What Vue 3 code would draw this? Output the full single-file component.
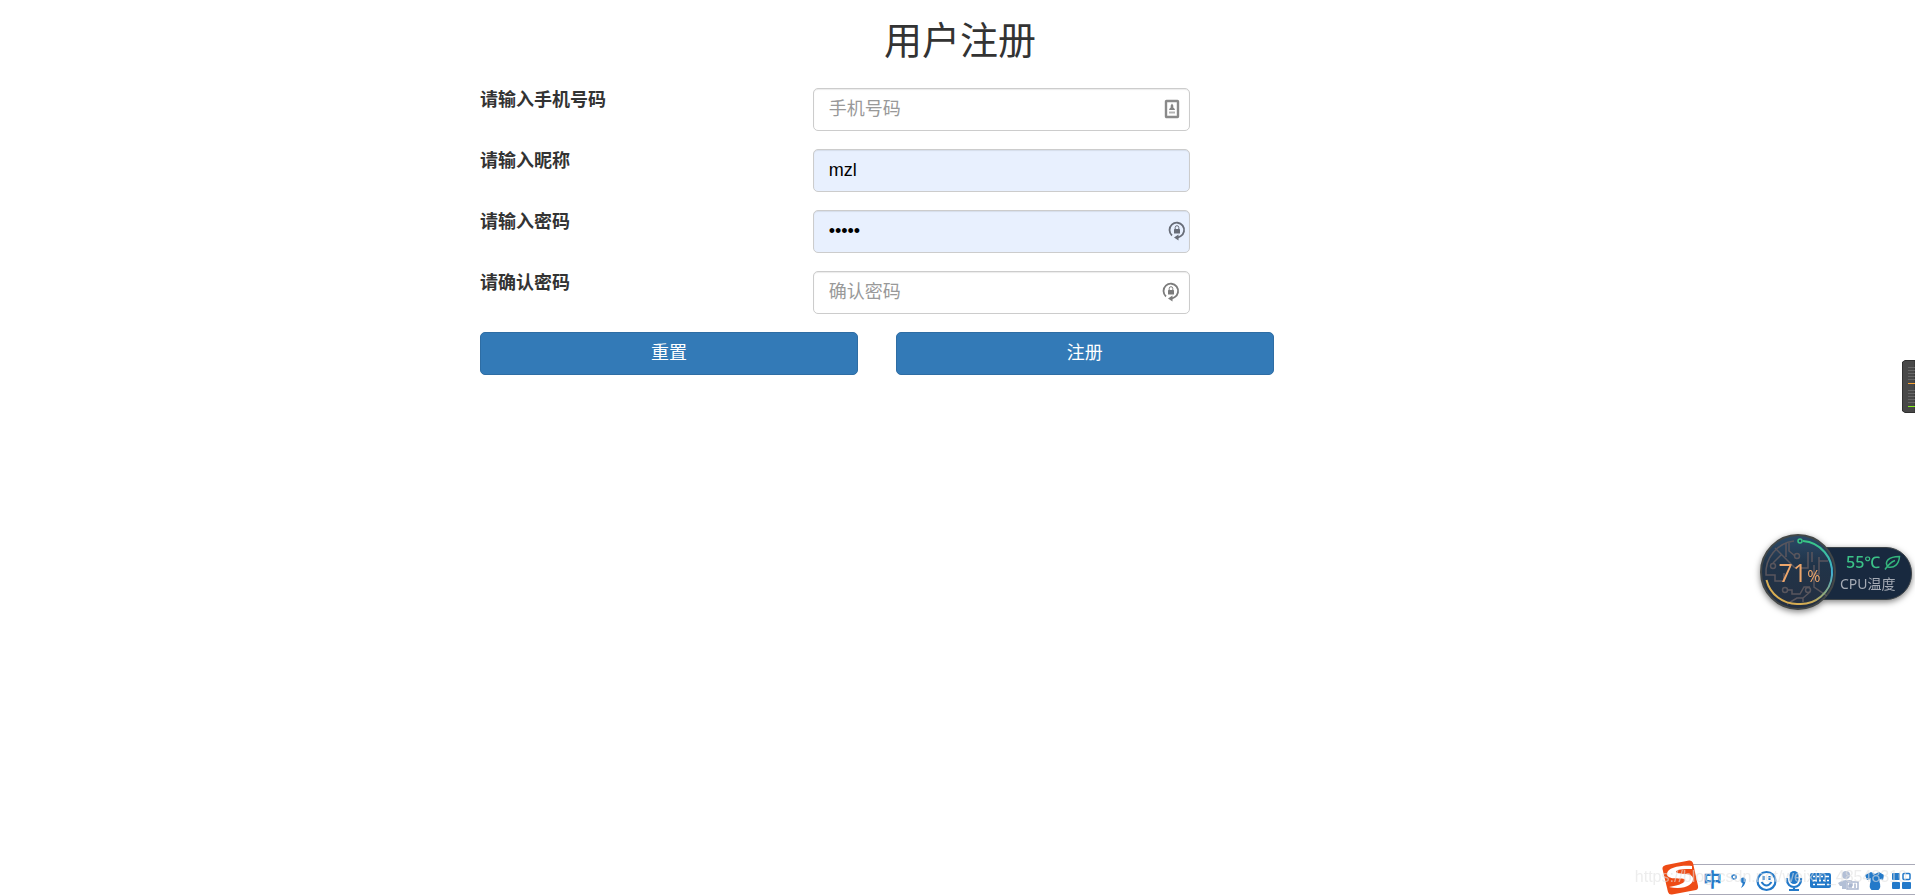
<template>
  <main class="page">
    <form class="register" @submit.prevent="register" @reset.prevent="resetForm">
      <h2>用户注册</h2>

      <div v-for="field in fields" :key="field.name" class="row">
        <label :for="field.name">{{ field.label }}</label>
        <div class="control">
          <input
            :id="field.name"
            v-model="form[field.name]"
            :type="field.type"
            :placeholder="field.placeholder"
            :class="{ autofill: field.autofill }"
            autocomplete="off"
          />
          <svg
            v-if="field.icon === 'card'"
            class="field-icon"
            width="16"
            height="20"
            viewBox="0 0 16 20"
          >
            <rect x="2" y="2" width="12" height="16" rx="0.500" fill="#fff" stroke="#8a8a8a" stroke-width="2.400" />
            <path d="M8 4.500l1.300 2v2l1.500 1.500v1H5.200v-1l1.500-1.500v-2z" fill="#858585" />
            <path d="M5 13.500h6" stroke="#b4b4b4" stroke-width="2" />
          </svg>
          <svg
            v-if="field.icon === 'lock'"
            class="field-icon"
            :class="{ edge: field.autofill }"
            width="18"
            height="20"
            viewBox="0 0 18 20"
          >
            <path d="M4 14.500A7.300 7.300 0 1 1 12.500 15.300L9 16.800" fill="none" stroke="currentColor" stroke-width="1.800" />
            <path d="M6 16.500l4.500-3v6z" fill="currentColor" />
            <rect x="6" y="8" width="6" height="4.500" rx="0.500" fill="currentColor" />
            <path d="M7.200 8V6.500a1.800 1.800 0 0 1 3.600 0V8" fill="none" stroke="currentColor" />
          </svg>
        </div>
      </div>

      <div class="actions">
        <button type="reset">重置</button>
        <button type="submit">注册</button>
      </div>
    </form>

    <!-- volume meter at the screen edge -->
    <svg class="meter" width="13" height="53" viewBox="0 0 13 53">
      <path d="M13 0.500H3L0.500 2V51L3 52.500H13z" fill="#484848" stroke="#303030" />
      <path d="M6 7.500h7M6 10.500h7M6 13.500h7M6 16.500h7M6 19.500h7M6 30.500h7M6 33.500h7M6 36.500h7M6 39.500h7M6 42.500h7" stroke="#666" />
      <path d="M6 23.500h7" stroke="#f5a031" />
      <path d="M6 46.500h7" stroke="#82f01e" />
    </svg>

    <!-- cpu widget -->
    <aside class="cpu">
      <div class="gauge">
        <svg width="76" height="76" viewBox="0 0 76 76">
          <defs>
            <linearGradient id="face" x1="0" y1="0" x2="0" y2="1">
              <stop offset="0" stop-color="#2b4a68" />
              <stop offset="0.400" stop-color="#213449" />
              <stop offset="1" stop-color="#242f41" />
            </linearGradient>
            <linearGradient id="ring" x1="0" y1="0" x2="0" y2="1">
              <stop offset="0" stop-color="#38c884" />
              <stop offset="0.500" stop-color="#41afd2" />
              <stop offset="0.850" stop-color="#91a979" />
              <stop offset="1" stop-color="#d8ad52" />
            </linearGradient>
          </defs>
          <circle cx="38" cy="38" r="37" fill="url(#face)" stroke="#434747" stroke-width="2" />
          <g fill="none" stroke="#59565d" stroke-width="1.500">
            <path d="M34 7A32 32 0 0 0 6 41H15V47H24V39" />
            <path d="M15 14l20 20M22 20l-9 9M26 9v14M29 9v8l6 5" />
            <circle cx="37" cy="22" r="2.500" />
            <circle cx="13" cy="32" r="2.500" />
            <path d="M48 18v16h-7M52 18v10M59 23v17h-7M68 27h-9M54 31v22l13 9" />
            <path d="M27 56h5v4h8l4-7h6M43 68v-4l7-6M27 70l10-6h6" />
            <circle cx="25" cy="56" r="2.500" />
            <circle cx="48" cy="56" r="2.500" />
          </g>
          <path d="M43 7A31.500 31.500 0 0 1 38 70" fill="none" stroke="url(#ring)" stroke-width="2" />
          <path d="M38 70A31.500 31.500 0 0 1 6.500 46" fill="none" stroke="#d8ad52" stroke-width="2" />
          <circle cx="40" cy="7" r="2" fill="#25445c" stroke="#38c884" stroke-width="1.500" />
        </svg>
        <span class="load">71<small>%</small></span>
      </div>
      <div class="temp">
        <span class="degrees">
          55℃
          <svg width="17" height="15" viewBox="0 0 17 15" fill="none" stroke="#34b67d" stroke-width="1.500">
            <path d="M4 12C0 7 4 1.500 15.500 1.500C15 9 10.500 13.500 4 12zM1 14.500C4 10 7 7 11 5.500" />
          </svg>
        </span>
        <span class="caption">CPU温度</span>
      </div>
    </aside>

    <!-- input method bar -->
    <div class="ime">
      <svg class="ime-logo" width="37" height="35" viewBox="0 0 37 35">
        <path d="M4 5L27 0.500Q30 0 31 3L36 26Q36.500 29 34 30L10 34.500Q7 35 6 32L0.500 9Q0 6 4 5z" fill="#ee4b15" />
        <path
          d="M30 6C20 5 5 7 5 14C5 20 18 18 22 19C25 20 22 25 7 27C22 30 32 25 31 18C30 12 16 15 14 12C14 9 22 9 30 9z"
          fill="#fff"
        />
      </svg>
      <div class="ime-bar">
        <span class="zh">中</span>
        <svg viewBox="0 0 27 29">
          <circle cx="8" cy="12" r="2" fill="none" stroke="#2379c9" stroke-width="1.500" />
          <path d="M14.500 15.500a2.600 2.600 0 1 1 5 0.500Q19 21 15 23Q17 20 16.500 18Q14.500 17.500 14.500 15.500z" fill="#2379c9" />
        </svg>
        <svg viewBox="0 0 27 29">
          <circle cx="13.500" cy="16" r="9" fill="none" stroke="#2379c9" stroke-width="2.200" />
          <path d="M10.500 11v4M16.500 11v4" stroke="#2379c9" stroke-width="2.200" />
          <path d="M8.500 17q5 7 10 0" fill="none" stroke="#2379c9" stroke-width="2" />
        </svg>
        <svg viewBox="0 0 27 29">
          <rect x="9.500" y="6" width="9" height="13" rx="4.500" fill="#2379c9" />
          <path d="M7 13v2a7 7 0 0 0 14 0v-2M14 22v3M9 25h10" fill="none" stroke="#2379c9" stroke-width="2.200" />
        </svg>
        <svg viewBox="0 0 27 29">
          <rect x="3" y="8" width="21" height="15" rx="2" fill="#2379c9" />
          <path
            d="M6 11.500h2M10 11.500h2M14 11.500h2M18 11.500h4M6 15.500h4M12 15.500h2M16 15.500h2M20 15.500h2M6 19.500h2M10 19.500h8M20 19.500h2"
            stroke="#fff"
            stroke-width="1.500"
          />
        </svg>
        <svg viewBox="0 0 27 29">
          <circle cx="12" cy="10" r="4" fill="#b2bfd6" />
          <path d="M4 18q4-3 8-3h6v2H12v7H8v-3H6z" fill="#b2bfd6" />
          <path d="M13 17h11v7H13z" fill="#fff" stroke="#aab7cf" stroke-width="1.500" />
          <path d="M15 19h3v1.500h-3V22h3M21 18.500V23" fill="none" stroke="#aab7cf" stroke-width="1.500" />
        </svg>
        <svg viewBox="0 0 27 29">
          <path d="M10 7l4 2 4-2 5 3-1 5-3.500-1v3q2 5-1 8h-7q-3-3-1-8v-3L6 15l-2-5z" fill="#2379c9" />
        </svg>
        <svg viewBox="0 0 27 29">
          <rect x="4" y="8" width="8" height="7" rx="1" fill="#2379c9" />
          <rect x="15" y="8.500" width="7" height="6" rx="1" fill="#fff" stroke="#2379c9" stroke-width="1.500" />
          <rect x="4" y="17" width="8" height="7" rx="1" fill="#2379c9" />
          <rect x="14" y="17" width="9" height="7" rx="1" fill="#2379c9" />
        </svg>
      </div>
      <span class="watermark">https://blog.csdn.net/weixin_48548310</span>
    </div>
  </main>
</template>

<script setup>
import { reactive } from "vue";

const fields = [
  { name: "phone", label: "请输入手机号码", type: "text", placeholder: "手机号码", icon: "card" },
  { name: "nickname", label: "请输入昵称", type: "text", placeholder: "昵称", autofill: true },
  { name: "password", label: "请输入密码", type: "password", placeholder: "密码", icon: "lock", autofill: true },
  { name: "confirm", label: "请确认密码", type: "password", placeholder: "确认密码", icon: "lock" },
];

const form = reactive({
  phone: "",
  nickname: "mzl",
  password: "12345",
  confirm: "",
});

const resetForm = () => {
  Object.keys(form).forEach((key) => {
    form[key] = "";
  });
};

const register = () => {
  if (form.password !== form.confirm) {
    form.confirm = "";
  }
};
</script>

<style>
body {
  background: #fff;
}
</style>

<style scoped>
* {
  box-sizing: border-box;
}

.page {
  padding-left: 5px;
  color: #333;
  font-family: "Liberation Sans", "Noto Sans CJK SC", sans-serif;
  font-size: 18px;
  line-height: 25px;
}

.register {
  max-width: 998px;
  margin: 0 auto;
}

h2 {
  margin: 0;
  padding: 20px 0 25px;
  font-size: 38px;
  font-weight: 400;
  line-height: 43px;
  text-align: center;
}

.row {
  display: grid;
  grid-template-columns: 4fr 5fr 3fr;
  margin-bottom: 18px;
}

label {
  padding: 0 19px;
  font-weight: 700;
}

.control {
  position: relative;
  padding: 0 19px;
}

input {
  display: block;
  width: 100%;
  height: 43px;
  padding: 8px 15px;
  border: 1px solid #ccc;
  border-radius: 5px;
  background: #fff;
  box-shadow: inset 0 1px 1px rgba(0, 0, 0, 0.08);
  color: #000;
  font: inherit;
}

input::placeholder {
  color: #999;
}

input.autofill {
  background: #e8f0fe;
}

.field-icon {
  position: absolute;
  top: 11px;
  right: 29px;
  color: #7c7c7c;
}

.field-icon.edge {
  right: 23px;
  color: #686d78;
}

.actions {
  display: grid;
  grid-template-columns: 5fr 5fr 2fr;
}

button {
  height: 43px;
  margin: 0 19px;
  padding: 0 15px;
  border: 1px solid #2e6da4;
  border-radius: 5px;
  background: #337ab7;
  color: #fff;
  font: inherit;
  cursor: pointer;
}

.meter {
  position: fixed;
  top: 360px;
  right: 0;
}

.cpu {
  position: fixed;
  top: 534px;
  right: 3px;
  display: flex;
  align-items: center;
  filter: drop-shadow(0 2px 3px rgba(0, 0, 0, 0.5));
}

.gauge {
  position: relative;
  z-index: 1;
  height: 76px;
}

.load {
  position: absolute;
  inset: 0;
  padding-left: 3px;
  color: #eda66b;
  font-family: "Open Sans", "Noto Sans", sans-serif;
  font-size: 25px;
  line-height: 76px;
  text-align: center;
}

.load small {
  font-size: 16px;
}

.temp {
  display: flex;
  flex-direction: column;
  justify-content: center;
  width: 97px;
  height: 53px;
  margin-top: 2px;
  margin-left: -21px;
  padding-left: 24px;
  border: 1px solid #3c4348;
  border-radius: 0 26px 26px 0;
  background: #18293f;
  font-family: "Noto Sans", "Noto Sans CJK SC", sans-serif;
  font-size: 14px;
  line-height: 21px;
}

.degrees {
  display: flex;
  align-items: center;
  gap: 4px;
  padding-left: 6px;
  color: #3bc287;
  font-size: 16px;
  font-weight: 500;
}

.caption {
  color: #a5abb5;
}

.ime {
  position: fixed;
  right: 0;
  bottom: 0;
  display: flex;
  align-items: flex-end;
}

.ime-logo {
  position: relative;
  z-index: 1;
}

.ime-bar {
  display: flex;
  height: 31px;
  margin-left: -10px;
  padding-left: 10px;
  border-top: 1px solid #aaaab8;
  border-bottom: 1px solid #aaaab8;
  background: #fff;
}

.ime-bar svg,
.zh {
  width: 27px;
  height: 29px;
}

.zh {
  color: #2379c9;
  font-size: 19px;
  font-weight: 700;
  line-height: 31px;
  text-align: center;
}

.watermark {
  position: absolute;
  right: 8px;
  bottom: 6px;
  z-index: 2;
  color: rgba(225, 225, 225, 0.6);
  font-size: 16px;
  line-height: 24px;
  white-space: nowrap;
}
</style>
